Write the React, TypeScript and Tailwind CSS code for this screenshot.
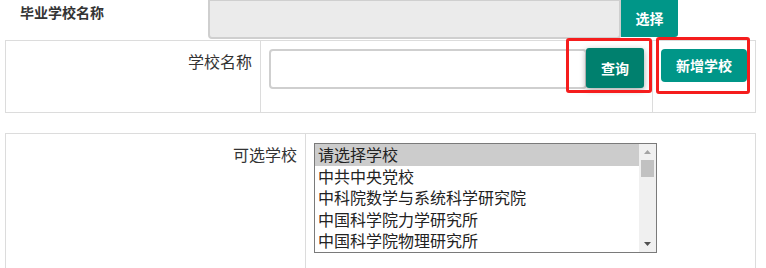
import { ChevronDown, ChevronUp } from "lucide-react"

const schools = ["请选择学校", "中共中央党校", "中科院数学与系统科学研究院", "中国科学院力学研究所", "中国科学院物理研究所"]

function SchoolList() {
  return (
    <div className="flex w-[343px] h-[110px] border border-[#7a7a7a] bg-white">
      <div className="flex-1 overflow-hidden">
        {schools.map((s, i) => (
          <div
            key={s}
            className={"h-[21.6px] pl-[3px] text-[16px] leading-[21.6px] text-[#222] whitespace-nowrap " + (i === 0 ? "bg-[#cccccc]" : "")}
          >
            {s}
          </div>
        ))}
      </div>
      <div className="w-[17px] bg-[#f0f0f0] flex flex-col items-center">
        <div className="h-[16px] flex items-center justify-center text-[#a3a3a3]">
          <svg width="7" height="4" viewBox="0 0 7 4"><path d="M0 4 L3.5 0 L7 4 Z" fill="currentColor" /></svg>
        </div>
        <div className="w-[13px] h-[17px] bg-[#c1c1c1]" />
        <div className="flex-1" />
        <div className="h-[16px] flex items-center justify-center text-[#505050]">
          <svg width="7" height="4" viewBox="0 0 7 4"><path d="M0 0 L7 0 L3.5 4 Z" fill="currentColor" /></svg>
        </div>
      </div>
    </div>
  )
}

export default function App() {
  return (
    <div className="w-[766px] h-[268px] overflow-hidden bg-white text-[#333] font-['Noto_Sans_CJK_SC','Noto_Sans',sans-serif]">
      {/* top row */}
      <div className="flex h-10">
        <div className="w-[208px] pl-5 pt-[1px] text-[14px] leading-[22px] font-bold text-[#333]">毕业学校名称</div>
        <div className="w-[413px] h-[40px] -mt-px border-2 border-[#cfcfcf] rounded-b-[4px] bg-[#ebebeb]" />
        <button className="w-[57px] h-[37px] bg-[#009688] text-white text-[14px] font-bold rounded-br-[3px]">选择</button>
      </div>

      {/* search table */}
      <div className="ml-[5px] w-[751px] h-[73px] border border-[#dcdcdc] flex">
        <div className="w-[255px] border-r border-[#dcdcdc] pr-2 pt-2 text-right text-[16px] leading-[24px]">学校名称</div>
        <div className="w-[392px] border-r border-[#dcdcdc] relative pl-2 pt-2 flex items-start">
          <div className="w-[318px] h-[40px] border-2 border-[#cfcfcf] rounded-[4px] bg-white" />
          <button className="-ml-px -mt-px w-[58px] h-[40px] bg-[#00806e] text-white text-[14px] font-bold rounded-[3px] shadow-[0_2px_6px_rgba(0,0,0,0.35)]">
            查询
          </button>
          <div className="absolute left-[305px] -top-[3px] w-[86px] h-[55px] border-[3px] border-[#f51d1d] rounded-[3px]" />
        </div>
        <div className="flex-1 relative pl-2 pt-2">
          <button className="w-[86px] h-[33px] bg-[#009688] text-white text-[14px] font-bold rounded-[4px]">新增学校</button>
          <div className="absolute left-[3px] -top-[4px] w-[94px] h-[57px] border-[3px] border-[#f51d1d] rounded-[3px]" />
        </div>
      </div>

      {/* list table */}
      <div className="mt-5 ml-[5px] w-[751px] h-[140px] border border-b-0 border-[#dcdcdc] flex">
        <div className="w-[300px] border-r border-[#dcdcdc] pr-2 pt-[10px] text-right text-[16px] leading-[20px]">可选学校</div>
        <div className="flex-1 pl-2 pt-[9px]">
          <SchoolList />
        </div>
      </div>
    </div>
  )
}
